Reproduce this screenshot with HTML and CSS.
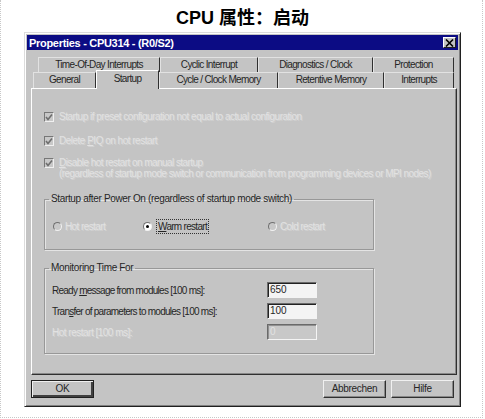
FILE: index.html
```html
<!DOCTYPE html>
<html>
<head>
<meta charset="utf-8">
<link rel="stylesheet" href="styles.css">
</head>
<body>
<div class="page">
  <h1 class="heading">CPU 属性：启动</h1>
  <div class="dialog">
    <div class="titlebar">
      <span class="title">Properties - CPU314 - (R0/S2)</span>
      <span class="close">
        <svg width="9" height="8" viewBox="0 0 9 8"><path d="M1 0.5 L8 7.5 M8 0.5 L1 7.5" stroke="#000" stroke-width="1.6"/></svg>
      </span>
    </div>
    <div class="tabs">
      <div class="tabrow back">
        <div class="tab w-tod">Time-Of-Day Interrupts</div>
        <div class="tab w-cyc">Cyclic Interrupt</div>
        <div class="tab w-diag">Diagnostics / Clock</div>
        <div class="tab w-prot">Protection</div>
      </div>
      <div class="tabrow front">
        <div class="tab w-gen">General</div>
        <div class="tab w-start active">Startup</div>
        <div class="tab w-ccm">Cycle / Clock Memory</div>
        <div class="tab w-ret">Retentive Memory</div>
        <div class="tab w-int">Interrupts</div>
      </div>
    </div>
    <div class="panel">
      <div class="cbrow">
        <span class="cb"><svg width="8" height="8" viewBox="0 0 8 8"><path d="M1 4 L3 6.5 L7 1.5" fill="none" stroke="#6e6e6e" stroke-width="1.6"/></svg></span>
        <span class="dis">Startup if preset configuration not equal to actual configuration</span>
      </div>
      <div class="cbrow r2">
        <span class="cb"><svg width="8" height="8" viewBox="0 0 8 8"><path d="M1 4 L3 6.5 L7 1.5" fill="none" stroke="#6e6e6e" stroke-width="1.6"/></svg></span>
        <span class="dis">Delete <u>P</u>IQ on hot restart</span>
      </div>
      <div class="cbrow r3">
        <span class="cb"><svg width="8" height="8" viewBox="0 0 8 8"><path d="M1 4 L3 6.5 L7 1.5" fill="none" stroke="#6e6e6e" stroke-width="1.6"/></svg></span>
        <span class="dis"><u>D</u>isable hot restart on manual startup<br>(regardless of startup mode switch or communication from programming devices or MPI nodes)</span>
      </div>

      <fieldset class="group g1">
        <legend>Startup after Power On (regardless of startup mode switch)</legend>
        <div class="radios">
          <div class="radio c1"><span class="rb"></span><span class="dis">Hot restart</span></div>
          <div class="radio c2"><span class="rb on"><span class="dot"></span></span><span class="focus"><u>W</u>arm restart</span></div>
          <div class="radio"><span class="rb"></span><span class="dis">Cold restart</span></div>
        </div>
      </fieldset>

      <fieldset class="group g2">
        <legend>Monitoring Time For</legend>
        <div class="frow"><span class="flabel">Ready <u>m</u>essage from modules [100 ms]:</span><span class="field">650</span></div>
        <div class="frow"><span class="flabel">Tran<u>s</u>fer of parameters to modules [100 ms]:</span><span class="field">100</span></div>
        <div class="frow"><span class="flabel dis">Hot restart [100 ms]:</span><span class="field off">0</span></div>
      </fieldset>
    </div>
    <div class="buttons">
      <div class="btn default">OK</div>
      <div class="spacer"></div>
      <div class="btn">Abbrechen</div>
      <div class="btn">Hilfe</div>
    </div>
  </div>
</div>
</body>
</html>
```
FILE: styles.css
```css
html, body {
  margin: 0;
  padding: 0;
  background: #fff;
}
.page {
  width: 481px;
  height: 417px;
  border-left: 1px dotted #c8c8c8;
  border-right: 1px dotted #c8c8c8;
  border-bottom: 1px dotted #c8c8c8;
  font-family: "Liberation Sans", Arial, sans-serif;
  color: #262626;
  overflow: hidden;
}
.heading {
  margin: 0;
  height: 32px;
  box-sizing: border-box;
  text-align: center;
  font-family: "Liberation Sans", "Noto Sans CJK SC", sans-serif;
  font-weight: bold;
  font-size: 18px;
  line-height: 36px;
  color: #000;
  padding-left: 2px;
}
.dialog {
  margin-left: 23px;
  width: 437px;
  height: 375px;
  box-sizing: border-box;
  background: #c4c4c4;
  border: 1px solid;
  border-color: #dcdcdc #202020 #202020 #dcdcdc;
  box-shadow: inset 1px 1px #fff, inset -1px -1px #808080;
  padding: 2px;
  display: flex;
  flex-direction: column;
}
.titlebar {
  height: 15px;
  background: #0c0c84;
  display: flex;
  align-items: center;
  justify-content: space-between;
  padding: 0 2px;
}
.title {
  color: #fff;
  font-weight: bold;
  font-size: 11px;
  letter-spacing: -0.3px;
}
.close {
  width: 13px;
  height: 11px;
  background: #c4c4c4;
  box-sizing: border-box;
  border: 1px solid;
  border-color: #fff #202020 #202020 #fff;
  display: flex;
  align-items: center;
  justify-content: center;
}
.tabs {
  margin-top: 7px;
  padding-left: 4px;
  display: flex;
  flex-direction: column;
}
.tabrow {
  display: flex;
  height: 15px;
}
.tabrow.back { padding-left: 7px; }
.tabrow.front {
  height: 16px;
  padding-left: 2px;
}
.tab {
  box-sizing: border-box;
  font-size: 10px;
  letter-spacing: -0.65px;
  text-align: center;
  line-height: 14px;
  border-top: 1px solid #e2e2e2;
  border-left: 1px solid #e2e2e2;
  border-right: 1px solid #303030;
}
.tab.active {
  position: relative;
  margin-top: -2px;
  height: 19px;
  line-height: 16px;
  border-top: 1px solid #fff;
  border-left: 1px solid #fff;
  background: #c4c4c4;
  z-index: 1;
}
.w-tod { width: 122px; }
.w-cyc { width: 98px; }
.w-diag { width: 115px; }
.w-prot { width: 81px; }
.w-gen { width: 63px; }
.w-start { width: 63px; }
.w-ccm { width: 119px; }
.w-ret { width: 106px; }
.w-int { width: 70px; }

.panel {
  margin-left: 4px;
  width: 426px;
  height: 287px;
  box-sizing: border-box;
  border: 1px solid;
  border-color: #fff #303030 #303030 #fff;
  box-shadow: inset -1px -1px #888;
  padding: 22px 0 0 12px;
}
.cbrow {
  display: flex;
  align-items: flex-start;
  font-size: 10px;
  line-height: 12px;
  height: 12px;
}
.cbrow.r2 { margin-top: 12px; }
.cbrow.r3 { margin-top: 10px; height: auto; line-height: 11px; }
.cb {
  flex: none;
  width: 10px;
  height: 10px;
  box-sizing: border-box;
  margin-top: 1px;
  margin-right: 5px;
  border: 1px solid;
  border-color: #777 #f0f0f0 #f0f0f0 #777;
  background: #c8c8c8;
  display: flex;
  align-items: center;
  justify-content: center;
}
.dis {
  color: #e2e2e2;
  text-shadow: 1px 1px 0 #d2d2d2;
  letter-spacing: -0.5px;
}
.cbrow.r3 .dis { letter-spacing: -0.55px; }
.radio .dis { letter-spacing: -0.6px; }

.group {
  margin: 0;
  width: 330px;
  box-sizing: border-box;
  border: 1px solid #989898;
  box-shadow: 1px 1px 0 #e4e4e4, inset 1px 1px 0 #e4e4e4;
  font-size: 10px;
  min-width: 0;
}
.group legend {
  padding: 0 2px;
  line-height: 10px;
  letter-spacing: -0.35px;
}
.g1 {
  margin-top: 15px;
  padding: 15px 0 16px 8px;
}
.g1 legend { margin-left: -4px; }
.g2 {
  margin-top: 13px;
  padding: 9px 0 13px 7px;
}
.g2 legend { margin-left: -3px; }
.radios {
  display: flex;
  height: 14px;
  align-items: center;
}
.radio {
  display: flex;
  align-items: center;
}
.radio.c1 { width: 90px; }
.radio.c2 { width: 125px; }
.rb {
  width: 9px;
  height: 9px;
  box-sizing: border-box;
  border-radius: 50%;
  border: 1px solid;
  border-color: #707070 #f2f2f2 #f2f2f2 #707070;
  background: #c8c8c8;
  margin-right: 3px;
  display: flex;
  align-items: center;
  justify-content: center;
}
.rb.on { background: #fff; margin-right: 4px; }
.dot {
  width: 3px;
  height: 3px;
  border-radius: 50%;
  background: #000;
}
.focus {
  border: 1px dotted #333;
  padding: 1px 1px;
  letter-spacing: -0.7px;
  line-height: 11px;
}
.frow {
  display: flex;
  align-items: center;
  height: 16px;
}
.frow + .frow { margin-top: 5px; }
.flabel {
  width: 215px;
  flex: none;
  letter-spacing: -0.75px;
}
.flabel.dis { letter-spacing: -0.5px; }
.field {
  width: 50px;
  height: 16px;
  box-sizing: border-box;
  border: 1px solid;
  border-color: #6a6a6a #f4f4f4 #f4f4f4 #6a6a6a;
  box-shadow: inset 1px 1px #222;
  background: #f4f4f4;
  padding-left: 2px;
  line-height: 14px;
}
.field.off {
  background: #c8c8c8;
  color: #e2e2e2;
  box-shadow: inset 1px 1px #909090;
}
.buttons {
  display: flex;
  margin-top: 5px;
  padding-left: 4px;
  height: 18px;
}
.spacer { flex: 1; }
.btn {
  width: 63px;
  height: 18px;
  box-sizing: border-box;
  border: 1px solid;
  border-color: #f0f0f0 #303030 #303030 #f0f0f0;
  box-shadow: inset -1px -1px #888;
  font-size: 10px;
  text-align: center;
  line-height: 16px;
  letter-spacing: -0.3px;
  margin-right: 4px;
}
.btn + .btn { margin-left: 1px; }
.btn.default {
  border: 1px solid #202020;
  box-shadow: inset 1px 1px #f0f0f0, inset -2px -2px #404040;
}
```
